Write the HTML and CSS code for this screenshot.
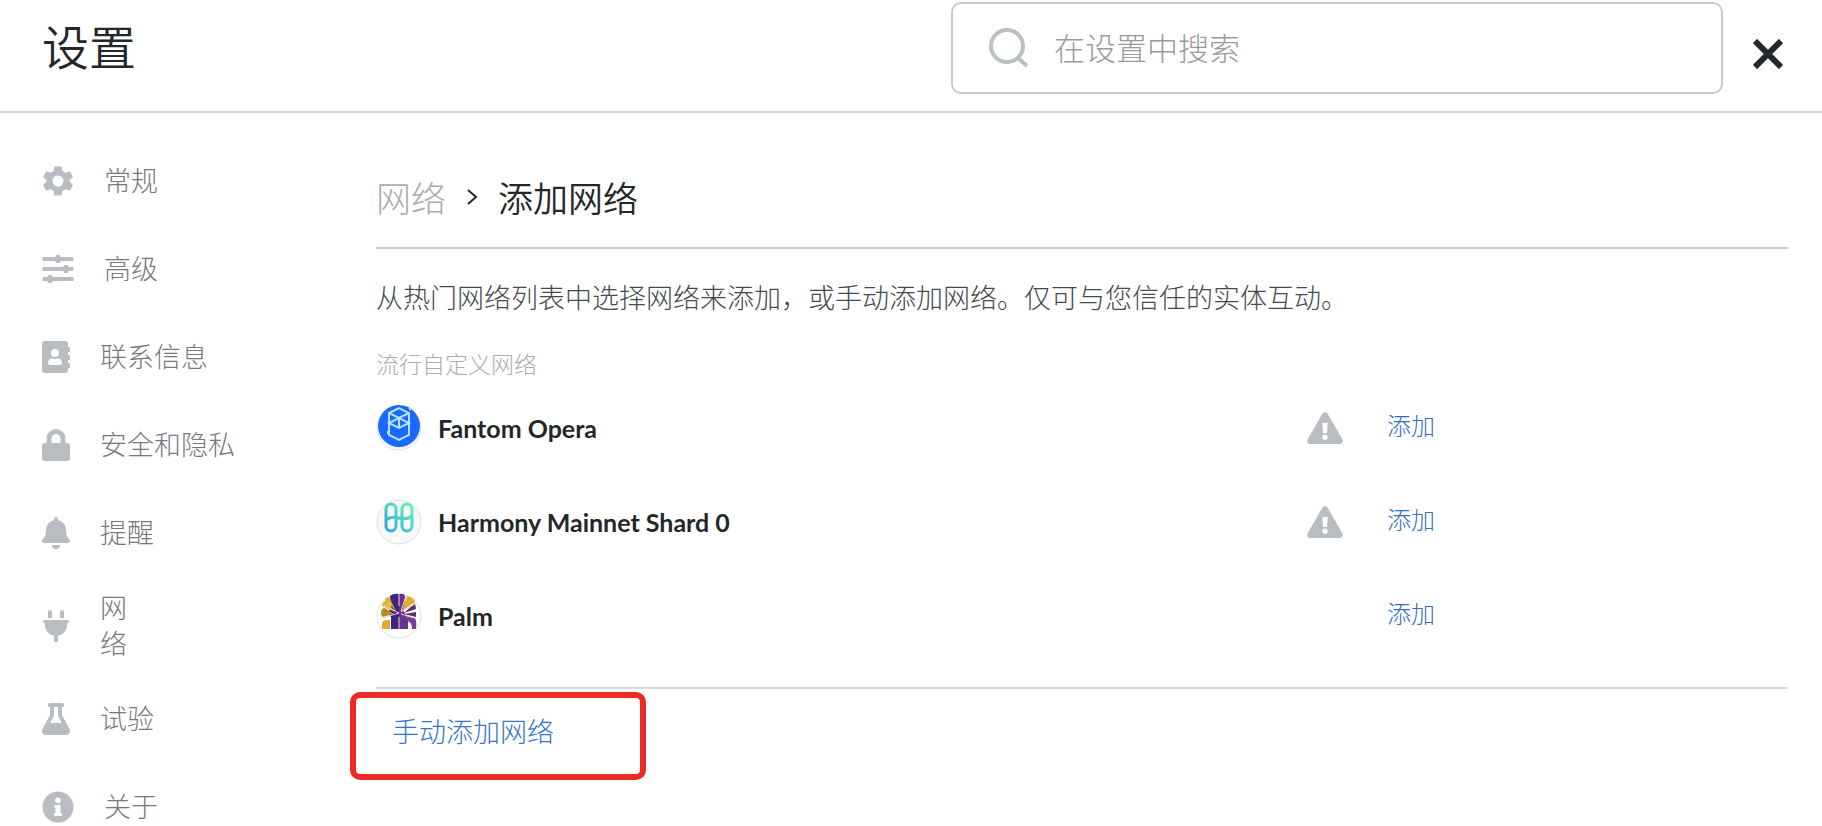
FILE: index.html
```html
<!DOCTYPE html>
<html lang="zh-CN">
<head>
<meta charset="utf-8">
<meta name="viewport" content="width=device-width, initial-scale=1">
<title>设置 - 添加网络</title>
<link rel="stylesheet" href="styles.css">
</head>
<body>

<header class="header">
  <h1 class="header-title">设置</h1>
  <form class="search" role="search">
    <label for="search" class="search-icon" aria-label="在设置中搜索">
      <svg width="40" height="40" viewBox="0 0 40 40" fill="none" stroke="#bbc0c5" stroke-width="4"><circle cx="18" cy="18" r="16"/><path d="M29 30l9 8"/></svg>
    </label>
    <input type="text" id="search" name="search" placeholder="在设置中搜索">
  </form>
  <button type="button" class="close" aria-label="关闭">
    <svg width="30" height="30" viewBox="0 0 30 30" fill="none" stroke="#24272a" stroke-width="6"><path d="M2 2l26 26M28 2L2 28"/></svg>
  </button>
</header>

<div class="page">
  <nav class="tabs">
    <a href="#general" class="tab">
      <svg width="32" height="32" viewBox="0 0 32 32"><path fill-rule="evenodd" d="M12.500 1.500h7l1 4.500 3 1.700 4.300-1.500 3.200 5.800-3.300 3v2l3.300 3-3.200 5.800-4.300-1.500-3 1.700-1 4.500h-7l-1-4.500-3-1.700-4.300 1.500L1 20l3.300-3v-2L1 12l3.200-5.800 4.300 1.500 3-1.700zM16 10.500a5.500 5.500 0 1 0 0 11 5.500 5.500 0 0 0 0-11z"/></svg>
      <span>常规</span>
    </a>
    <a href="#advanced" class="tab">
      <svg width="32" height="32" viewBox="0 0 32 32"><path d="M1.500 4H13.500V3.500q0-1.500 1.500-1.500h2Q18.500 2 18.500 3.500V4h12q1 0 1 1v2q0 1-1 1h-12v.5q0 1.500-1.500 1.500h-2q-1.500 0-1.500-1.500V8h-12q-1 0-1-1V5q0-1 1-1zM1.500 14H21.500v-.5q0-1.500 1.500-1.500h2q1.500 0 1.500 1.500v.5h4q1 0 1 1v2q0 1-1 1h-4v.5q0 1.500-1.500 1.500h-2q-1.500 0-1.500-1.500V18h-20q-1 0-1-1v-2q0-1 1-1zM1.500 24H5.500v-.5q0-1.500 1.500-1.500h2q1.500 0 1.500 1.500v.5h20q1 0 1 1v2q0 1-1 1h-20v.5q0 1.500-1.500 1.500h-2q-1.500 0-1.500-1.500V28h-4q-1 0-1-1v-2q0-1 1-1z"/></svg>
      <span>高级</span>
    </a>
    <a href="#contacts" class="tab">
      <svg width="28" height="32" viewBox="0 0 28 32"><path fill-rule="evenodd" d="M3 0h20q3 0 3 3v3h1q1 0 1 1v3q0 1-1 1h-1v3h1q1 0 1 1v3q0 1-1 1h-1v3h1q1 0 1 1v3q0 1-1 1h-1v2q0 3-3 3H3q-3 0-3-3V3q0-3 3-3zm10 8a4 4 0 1 0 0 8 4 4 0 0 0 0-8zM8 24h10q2 0 2-2 0-4.500-4.500-4.500-2.500 1-5 0Q6 17.500 6 22q0 2 2 2z"/></svg>
      <span>联系信息</span>
    </a>
    <a href="#security" class="tab">
      <svg width="28" height="32" viewBox="0 0 28 32"><path fill-rule="evenodd" d="M25 14h-1.500V9.500a9.500 9.500 0 0 0-19 0V14H3q-3 0-3 3v12q0 3 3 3h22q3 0 3-3V17q0-3-3-3zm-6.500 0h-9V9.500a4.500 4.500 0 0 1 9 0z"/></svg>
      <span>安全和隐私</span>
    </a>
    <a href="#alerts" class="tab">
      <svg width="28" height="32" viewBox="0 0 28 32"><path d="M14 32a4 4 0 0 0 4-4h-8a4 4 0 0 0 4 4zM27.500 22.600c-1.200-1.300-3.500-3.200-3.500-9.600 0-4.900-3.400-8.700-8-9.700V2a2 2 0 0 0-4 0v1.300C7.400 4.300 4 8.100 4 13c0 6.400-2.300 8.300-3.500 9.600C-.6 24 .3 26 2 26h24c1.700 0 2.600-2 1.500-3.400z"/></svg>
      <span>提醒</span>
    </a>
    <a href="#networks" class="tab tab-narrow">
      <svg width="28" height="32" viewBox="0 0 28 32"><path d="M6 2q0-2 2-2t2 2v6H6zM18 2q0-2 2-2t2 2v6h-4zM2 10h24q1 0 1 1v1q0 1-1 1h-1v2c0 5.500-4 9.800-9 10.800V32h-4v-6.200C7 24.800 3 20.500 3 15v-2H2q-1 0-1-1v-1q0-1 1-1z"/></svg>
      <span>网络</span>
    </a>
    <a href="#experimental" class="tab">
      <svg width="28" height="32" viewBox="0 0 28 32"><path fill-rule="evenodd" d="M7.500 0h13q1.500 0 1.500 1.500v1Q22 4 20.500 4H20v8l7.300 13.500C29 28.500 27.500 32 24 32H4C.5 32-1 28.500.7 25.500L8 12V4h-.5Q6 4 6 2.500v-1Q6 0 7.500 0zM12 4v9l-3.800 7h11.600L16 13V4z"/></svg>
      <span>试验</span>
    </a>
    <a href="#about" class="tab">
      <svg width="32" height="32" viewBox="0 0 32 32"><path fill-rule="evenodd" d="M16 .5a15.500 15.500 0 1 0 0 31 15.500 15.500 0 0 0 0-31zM16 6.500a2.800 2.800 0 1 1 0 5.600 2.800 2.800 0 0 1 0-5.600zM12.500 14h6v8h1.500v3h-8v-3h1.500v-5h-1z"/></svg>
      <span>关于</span>
    </a>
  </nav>

  <main class="content">
    <div class="breadcrumb">
      <a href="#networks">网络</a>
      <svg width="12" height="18" viewBox="0 0 12 18" fill="none" stroke="#24272a" stroke-width="2"><path d="M2 2l8 7-8 7"/></svg>
      <h2>添加网络</h2>
    </div>

    <p class="description">从热门网络列表中选择网络来添加，或手动添加网络。仅可与您信任的实体互动。</p>
    <h3 class="list-title">流行自定义网络</h3>

    <ul class="networks">
      <li class="network">
        <svg class="network-logo" width="46" height="46" viewBox="0 0 46 46">
          <circle cx="23" cy="23" r="22" fill="#f4f6fb" stroke="#e2e5ec"/>
          <circle cx="23" cy="21" r="21" fill="#1969ff"/>
          <path d="M13 8l10-5 10 5v22l-10 5-10-5zM13 8l10 5 10-5M13 18l10-5 10 5-10 5zM23 13v10M12 26v3M33 3l2 2" fill="none" stroke="#b7e1ff" stroke-width="2"/>
        </svg>
        <span class="network-name">Fantom Opera</span>
        <svg class="warning" width="36" height="32" viewBox="0 0 36 32"><path fill-rule="evenodd" d="M15.500 1.500q2.500-3 5 0l15 26Q37 31 33 32H3q-4-1-2.500-4.500zM15.300 11l.7 10h4l.7-10zM18 22.500a2.700 2.700 0 1 0 0 5.400 2.700 2.700 0 0 0 0-5.400z"/></svg>
        <button type="button" class="link">添加</button>
      </li>
      <li class="network">
        <svg class="network-logo" width="46" height="46" viewBox="0 0 46 46">
          <defs><linearGradient id="harmony" x1="0" y1="1" x2="1" y2="0"><stop offset="0" stop-color="#2ca5df"/><stop offset="1" stop-color="#68f5b4"/></linearGradient></defs>
          <circle cx="23" cy="23" r="22" fill="#f7f8f9" stroke="#dfe0e3"/>
          <path d="M10 10a5 5 0 0 1 10 0v17a5 5 0 0 1-10 0zM26 10a5 5 0 0 1 10 0v17a5 5 0 0 1-10 0zM10 21q5-4 13-2t13-2" fill="none" stroke="url(#harmony)" stroke-width="3"/>
        </svg>
        <span class="network-name">Harmony Mainnet Shard 0</span>
        <svg class="warning" width="36" height="32" viewBox="0 0 36 32"><path fill-rule="evenodd" d="M15.500 1.500q2.500-3 5 0l15 26Q37 31 33 32H3q-4-1-2.500-4.500zM15.300 11l.7 10h4l.7-10zM18 22.500a2.700 2.700 0 1 0 0 5.400 2.700 2.700 0 0 0 0-5.400z"/></svg>
        <button type="button" class="link">添加</button>
      </li>
      <li class="network">
        <svg class="network-logo" width="46" height="46" viewBox="0 0 46 46">
          <circle cx="23" cy="23" r="22" fill="#fff" stroke="#e0dfe4"/>
          <path fill="#41257a" d="M14 3q4-3 9-2v35h-8V24l-3-4 3-6z"/>
          <path fill="#6a3190" d="M23 1q5-1 6 2l-1 16 4 6v11h-9z"/>
          <path fill="#e0b02c" d="M31 3q6 1 8 6l-13 9zM9 6q2-2 4-2l7 14zM6 13q0-4 4-6l9 12z"/>
          <path fill="#d9aa2d" d="M6 36q-1-8 3-9h5v9z"/>
          <path fill="#b9892f" d="M5 20q0-5 4-5l9 6-12 3z"/>
          <path fill="#59306f" d="M39 10l1 6-12 4zM28 21l12-2v5z"/>
          <path fill="#7a3f94" d="M28 23l11 2q2 4 1 11h-4q0-6-3-7z"/>
          <path fill="none" stroke="#e8d3ca" d="M23 1v12M23 20L8 12M23 20L7 25M25 18l5-15M25 19l14-8M25 21l14 4M23 24v12"/>
        </svg>
        <span class="network-name">Palm</span>
        <button type="button" class="link">添加</button>
      </li>
    </ul>

    <button type="button" class="add-manually">手动添加网络</button>
  </main>
</div>

</body>
</html>
```

FILE: styles.css
```css
* {
  box-sizing: border-box;
}
body {
  margin: 0;
  background: #fff;
  color: #24272a;
  font: 300 27px/36px "Noto Sans CJK SC", sans-serif;
}
h1, h2, h3, p, ul {
  margin: 0;
  padding: 0;
  font-weight: inherit;
}
a {
  color: inherit;
  text-decoration: none;
}
button {
  border: 0;
  padding: 0;
  background: none;
  font: inherit;
  cursor: pointer;
}
svg {
  display: block;
  flex: none;
}

/* header */
.header {
  display: flex;
  align-items: flex-start;
  padding: 2px 39px 17px 42px;
  border-bottom: 2px solid #d9dbdd;
}
.header-title {
  flex: 1;
  padding-top: 13px;
  font-size: 47px;
  line-height: 60px;
  font-weight: 350;
}
.search {
  display: flex;
  align-items: center;
  gap: 25px;
  flex: 0 1 772px;
  height: 92px;
  padding: 0 36px;
  border: 2px solid #c8cbce;
  border-radius: 10px;
}
.search input {
  flex: 1;
  min-width: 0;
  border: 0;
  padding: 0 0 2px;
  outline: 0;
  background: none;
  color: #24272a;
  font: inherit;
  font-size: 31px;
  line-height: 44px;
}
.search input::placeholder {
  color: #999b9e;
  opacity: 1;
}
.close {
  margin: 37px 0 0 30px;
}

/* sidebar */
.page {
  display: grid;
  grid-template-columns: 376px 1fr;
}
.tabs {
  padding: 24px 0 0 42px;
}
.tab {
  display: flex;
  align-items: center;
  gap: 30px;
  min-height: 88px;
  padding: 12px 0;
  color: #77797c;
}
.tab span {
  padding-bottom: 2px;
}
.tab svg,
.warning {
  fill: #b9bdc2;
}
.tab-narrow span {
  width: 28px;
}

/* content */
.content {
  padding: 58px 34px 0 0;
}
.breadcrumb {
  display: flex;
  align-items: center;
  gap: 20px;
  padding-bottom: 24px;
  border-bottom: 2px solid #c9cbce;
  font-size: 35px;
  line-height: 52px;
}
.breadcrumb a {
  color: #a9adb4;
}
.breadcrumb h2 {
  font-size: inherit;
  font-weight: 350;
}
.description {
  padding-top: 30px;
  color: #46494d;
}
.list-title {
  padding-top: 30px;
  color: #a9adb4;
  font-size: 23px;
}
.networks {
  list-style: none;
  border-bottom: 2px solid #d9dbdd;
}
.network {
  display: flex;
  align-items: center;
  width: 75%;
  height: 94px;
}
.network:last-child {
  margin-bottom: 24px;
}
.network-name {
  flex: 1;
  padding-left: 16px;
  font: 700 25px/36px Lato, sans-serif;
}
.warning {
  margin-right: 44px;
}
.link {
  padding-bottom: 6px;
  color: #356fc0;
  font-size: 24px;
}
.add-manually {
  display: block;
  margin: 3px 0 0 -26px;
  width: 296px;
  height: 88px;
  padding: 0 0 10px 36px;
  border: 6px solid #ee2a24;
  border-radius: 10px;
  color: #3577ca;
  text-align: left;
}
```
